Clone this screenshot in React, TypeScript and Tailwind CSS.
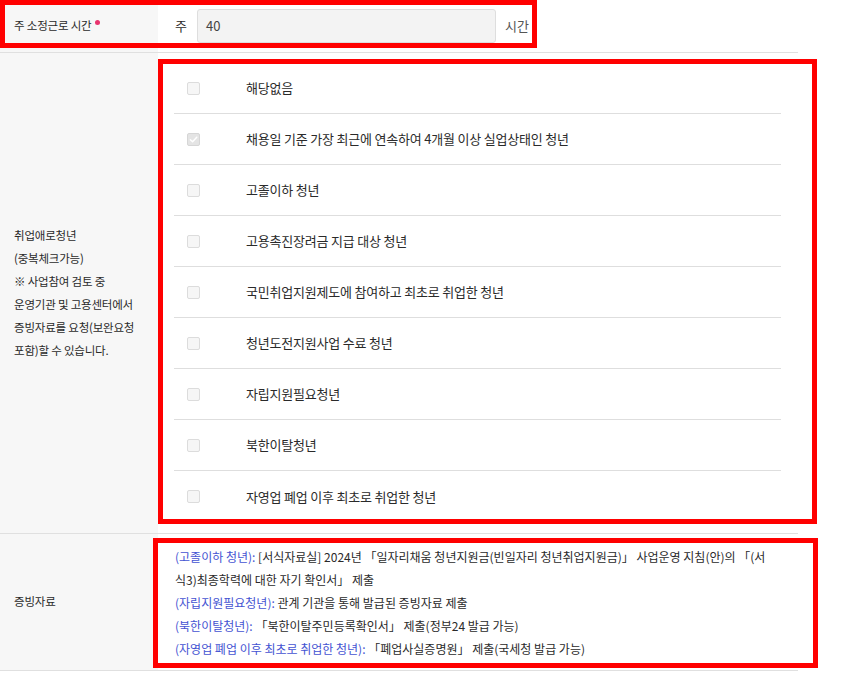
import React from "react";

const FONT = { fontFamily: '"Noto Sans CJK KR", "Noto Sans", sans-serif' };

const options = [
  { label: "해당없음", checked: false },
  { label: "채용일 기준 가장 최근에 연속하여 4개월 이상 실업상태인 청년", checked: true },
  { label: "고졸이하 청년", checked: false },
  { label: "고용촉진장려금 지급 대상 청년", checked: false },
  { label: "국민취업지원제도에 참여하고 최초로 취업한 청년", checked: false },
  { label: "청년도전지원사업 수료 청년", checked: false },
  { label: "자립지원필요청년", checked: false },
  { label: "북한이탈청년", checked: false },
  { label: "자영업 폐업 이후 최초로 취업한 청년", checked: false },
];

function Checkbox({ checked }: { checked: boolean }) {
  return (
    <span
      className={`flex h-[13px] w-[13px] shrink-0 items-center justify-center rounded-[2px] border ${
        checked ? "border-[#d6d6d6] bg-[#e4e4e4]" : "border-[#dcdcdc] bg-[#f6f6f6]"
      }`}
    >
      {checked && (
        <svg width="9" height="9" viewBox="0 0 10 10" fill="none">
          <path d="M1.5 5.2 L4 7.6 L8.6 2.4" stroke="#ffffff" strokeWidth="1.6" strokeLinecap="round" strokeLinejoin="round" />
        </svg>
      )}
    </span>
  );
}

function Label({ children }: { children: React.ReactNode }) {
  return (
    <div className="flex w-[158px] shrink-0 items-center bg-[#f7f7f7] pl-[14px] text-[11.5px] tracking-[-0.2px] text-[#2a2a2a]">
      {children}
    </div>
  );
}

export default function App() {
  return (
    <div className="relative min-h-[675px] bg-white" style={FONT}>
      <div className="w-[798px]">
        {/* 주 소정근로 시간 */}
        <div className="flex h-[53px] border-b border-[#e0e0e0]">
          <Label>
            <span>주 소정근로 시간</span>
            <span className="mb-[8px] ml-[4px] h-[5px] w-[5px] rounded-full bg-[#e8346e]" />
          </Label>
          <div className="flex items-center pl-[17px] text-[13px] text-[#2a2a2a]">
            <span>주</span>
            <div className="ml-[10px] flex h-[34px] w-[299px] items-center rounded-[3px] border border-[#dedede] bg-[#f3f3f3] px-[8px] text-[#444]">
              40
            </div>
            <span className="ml-[9px] text-[#555]">시간</span>
          </div>
        </div>

        {/* 취업애로청년 */}
        <div className="flex h-[481px] border-b border-[#e0e0e0]">
          <Label>
            <div className="leading-[23px]">
              <p>취업애로청년</p>
              <p>(중복체크가능)</p>
              <p>※ 사업참여 검토 중</p>
              <p>운영기관 및 고용센터에서</p>
              <p>증빙자료를 요청(보완요청</p>
              <p>포함)할 수 있습니다.</p>
            </div>
          </Label>
          <div className="flex-1 pb-[11px] pl-[16px] pr-[17px] pt-[10px]">
            <ul className="divide-y divide-[#dedede]">
              {options.map((o) => (
                <li key={o.label} className="flex h-[51px] items-center pl-[13px]">
                  <Checkbox checked={o.checked} />
                  <span className="ml-[46px] text-[13px] tracking-[-0.2px] text-[#2a2a2a]">{o.label}</span>
                </li>
              ))}
            </ul>
          </div>
        </div>

        {/* 증빙자료 */}
        <div className="flex h-[137px] border-b border-[#e0e0e0]">
          <Label>
            <span>증빙자료</span>
          </Label>
          <div className="flex flex-col justify-center pl-[17px] text-[12px] leading-[23px] text-[#2a2a2a] whitespace-nowrap">
            <p>
              <span className="text-[#4453d2]">(고졸이하 청년):</span> [서식자료실] 2024년 「일자리채움 청년지원금(빈일자리 청년취업지원금)」 사업운영 지침(안)의 「(서
            </p>
            <p>식3)최종학력에 대한 자기 확인서」 제출</p>
            <p>
              <span className="text-[#4453d2]">(자립지원필요청년):</span> 관계 기관을 통해 발급된 증빙자료 제출
            </p>
            <p>
              <span className="text-[#4453d2]">(북한이탈청년):</span> 「북한이탈주민등록확인서」 제출(정부24 발급 가능)
            </p>
            <p>
              <span className="text-[#4453d2]">(자영업 폐업 이후 최초로 취업한 청년):</span> 「폐업사실증명원」 제출(국세청 발급 가능)
            </p>
          </div>
        </div>
      </div>

      {/* annotation boxes */}
      <div className="pointer-events-none absolute left-0 top-0 h-[48px] w-[537px] border-[5px] border-[#ff0000]" />
      <div className="pointer-events-none absolute left-[158px] top-[59px] h-[465px] w-[659px] border-[5px] border-[#ff0000]" />
      <div className="pointer-events-none absolute left-[153px] top-[538px] h-[130px] w-[665px] border-[5px] border-[#ff0000]" />
    </div>
  );
}
